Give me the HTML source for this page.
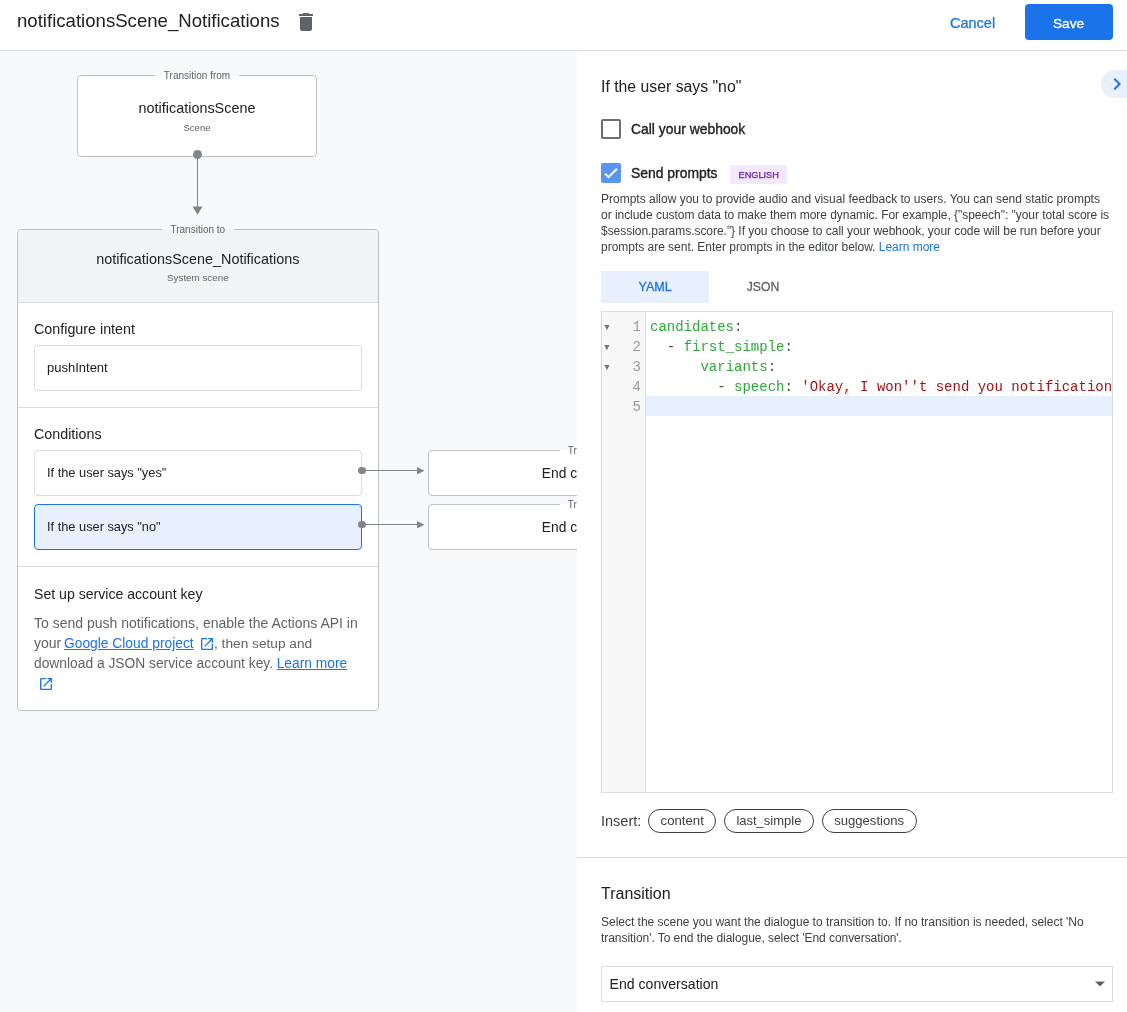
<!DOCTYPE html>
<html><head><meta charset="utf-8">
<style>
*{box-sizing:border-box;margin:0;padding:0}
html,body{width:1127px;height:1012px;overflow:hidden;background:#fff}
body{font-family:"Liberation Sans",sans-serif;color:#202124;position:relative}
.a{position:absolute;white-space:nowrap}
a{color:#1a73e8;text-decoration:underline}
</style></head>
<body><div style="position:absolute;left:0;top:0;width:1127px;height:1012px;will-change:transform">
<div class="a" style="left:0px;top:51px;width:577px;height:961px;background:#f8f9fa"></div>
<div class="a" style="left:0px;top:0px;width:1127px;height:50px;background:#fff"></div>
<div class="a" style="left:0px;top:50px;width:1127px;height:1px;background:#dadce0"></div>
<div class="a" id="title" style="left:17px;top:10px;font-size:18.6px;line-height:22px;color:#202124;font-weight:normal;letter-spacing:0px;">notificationsScene_Notifications</div>
<svg class="a" style="left:294px;top:10px" width="24" height="24" viewBox="0 0 24 24"><path fill="#5f6368" d="M6 19c0 1.1.9 2 2 2h8c1.1 0 2-.9 2-2V7H6v12zM19 4h-3.5l-1-1h-5l-1 1H5v2h14V4z"/></svg>
<div class="a" id="cancel" style="left:950px;top:15px;font-size:14.5px;line-height:17px;color:#1a73e8;font-weight:normal;letter-spacing:0px;-webkit-text-stroke:0.25px #1a73e8;">Cancel</div>
<div class="a" style="left:1025px;top:4px;width:88px;height:36px;background:#1a73e8;border-radius:4px"></div>
<div class="a" id="save" style="left:1053px;top:16px;font-size:13.6px;line-height:16px;color:#fff;font-weight:normal;letter-spacing:0px;-webkit-text-stroke:0.3px #fff;">Save</div>
<div class="a" style="left:77px;top:75px;width:240px;height:82px;background:#fff;border:1px solid #bdc1c6;border-radius:4px"></div>
<div class="a" style="left:155px;top:74px;width:84px;height:3px;background:linear-gradient(#f8f9fa 0,#f8f9fa 1.5px,#fff 1.5px)"></div>
<div class="a" id="tfrom" style="left:-3px;width:400px;text-align:center;top:70px;font-size:10px;line-height:12px;color:#5f6368;font-weight:normal;letter-spacing:0px;">Transition from</div>
<div class="a" id="nscene" style="left:-3px;width:400px;text-align:center;top:100px;font-size:14.4px;line-height:17px;color:#202124;font-weight:normal;letter-spacing:0px;">notificationsScene</div>
<div class="a" id="scene" style="left:-3px;width:400px;text-align:center;top:122px;font-size:9.5px;line-height:11px;color:#5f6368;font-weight:normal;letter-spacing:0px;">Scene</div>
<div class="a" style="left:197px;top:154px;width:1px;height:54px;background:#80868b"></div>
<svg class="a" style="left:192px;top:206px" width="11" height="9" viewBox="0 0 11 9"><path d="M0.5 0.5L10.5 0.5L5.5 8.8Z" fill="#80868b"/></svg>
<div class="a" style="left:193px;top:149.5px;width:9px;height:9px;border-radius:50%;background:#80868b"></div>
<div class="a" style="left:17px;top:229px;width:362px;height:482px;background:#fff;border:1px solid #bdc1c6;border-radius:4px"></div>
<div class="a" style="left:18px;top:230px;width:360px;height:72px;background:#f1f3f4;border-radius:3px 3px 0 0"></div>
<div class="a" style="left:18px;top:302px;width:360px;height:1px;background:#dadce0"></div>
<div class="a" style="left:162px;top:228px;width:72px;height:3px;background:linear-gradient(#f8f9fa 0,#f8f9fa 1.5px,#f1f3f4 1.5px)"></div>
<div class="a" id="tto" style="left:-2.1999999999999886px;width:400px;text-align:center;top:224px;font-size:10px;line-height:12px;color:#5f6368;font-weight:normal;letter-spacing:0px;">Transition to</div>
<div class="a" id="nsn" style="left:-2.1999999999999886px;width:400px;text-align:center;top:251px;font-size:14.4px;line-height:17px;color:#202124;font-weight:normal;letter-spacing:0px;">notificationsScene_Notifications</div>
<div class="a" id="sysscene" style="left:-2.1999999999999886px;width:400px;text-align:center;top:272px;font-size:9.8px;line-height:12px;color:#5f6368;font-weight:normal;letter-spacing:0px;">System scene</div>
<div class="a" id="cfg" style="left:34px;top:321px;font-size:14.3px;line-height:17px;color:#202124;font-weight:normal;letter-spacing:0px;">Configure intent</div>
<div class="a" style="left:34px;top:345px;width:328px;height:46px;background:#fff;border:1px solid #dadce0;border-radius:4px"></div>
<div class="a" id="push" style="left:47px;top:360px;font-size:13px;line-height:16px;color:#202124;font-weight:normal;letter-spacing:0px;">pushIntent</div>
<div class="a" style="left:18px;top:407px;width:360px;height:1px;background:#dadce0"></div>
<div class="a" id="cond" style="left:34px;top:426px;font-size:14.3px;line-height:17px;color:#202124;font-weight:normal;letter-spacing:0px;">Conditions</div>
<div class="a" style="left:34px;top:450px;width:328px;height:46px;background:#fff;border:1px solid #dadce0;border-radius:4px"></div>
<div class="a" id="c1" style="left:47px;top:465px;font-size:12.8px;line-height:15px;color:#202124;font-weight:normal;letter-spacing:0px;">If the user says "yes"</div>
<div class="a" style="left:34px;top:504px;width:328px;height:46px;background:#e8f0fe;border:1px solid #1a73e8;border-radius:4px"></div>
<div class="a" id="c2" style="left:47px;top:519px;font-size:12.8px;line-height:15px;color:#202124;font-weight:normal;letter-spacing:0px;">If the user says "no"</div>
<div class="a" style="left:18px;top:566px;width:360px;height:1px;background:#dadce0"></div>
<div class="a" id="setup" style="left:34px;top:586px;font-size:14.1px;line-height:17px;color:#202124;font-weight:normal;letter-spacing:0px;">Set up service account key</div>
<div class="a" id="p1" style="left:34px;top:615px;font-size:14px;line-height:17px;color:#5f6368;font-weight:normal;letter-spacing:0px;">To send push notifications, enable the Actions API in</div>
<div class="a" id="p2" style="left:34px;top:635px;font-size:14px;line-height:17px;color:#5f6368;font-weight:normal;letter-spacing:0px;">your</div>
<div class="a" id="p2l" style="left:64px;top:635px;font-size:13.8px;line-height:17px;color:#1a73e8;font-weight:normal;letter-spacing:0px;"><a>Google Cloud project</a></div>
<svg class="a" style="left:198.8px;top:635.9px" width="16" height="16" viewBox="0 0 24 24"><path fill="#1a73e8" d="M19 19H5V5h7V3H5c-1.11 0-2 .9-2 2v14c0 1.1.89 2 2 2h14c1.1 0 2-.9 2-2v-7h-2v7zM14 3v2h3.59l-9.83 9.83 1.41 1.41L19 6.41V10h2V3h-7z"/></svg>
<div class="a" id="p2b" style="left:214px;top:636px;font-size:13.7px;line-height:16px;color:#5f6368;font-weight:normal;letter-spacing:0px;">, then setup and</div>
<div class="a" id="p3" style="left:34px;top:655px;font-size:13.8px;line-height:17px;color:#5f6368;font-weight:normal;letter-spacing:0px;">download a JSON service account key.</div>
<div class="a" id="p3l" style="left:276.7px;top:655px;font-size:13.8px;line-height:17px;color:#1a73e8;font-weight:normal;letter-spacing:0px;"><a>Learn more</a></div>
<svg class="a" style="left:37.9px;top:676.3px" width="16" height="16" viewBox="0 0 24 24"><path fill="#1a73e8" d="M19 19H5V5h7V3H5c-1.11 0-2 .9-2 2v14c0 1.1.89 2 2 2h14c1.1 0 2-.9 2-2v-7h-2v7zM14 3v2h3.59l-9.83 9.83 1.41 1.41L19 6.41V10h2V3h-7z"/></svg>
<div class="a" style="left:362px;top:470.0px;width:56px;height:1px;background:#80868b"></div>
<svg class="a" style="left:416.5px;top:466.75px" width="7.5" height="7.5" viewBox="0 0 7.5 7.5"><path d="M0 0L7.5 3.75L0 7.5Z" fill="#80868b"/></svg>
<div class="a" style="left:358px;top:466.75px;width:7.5px;height:7.5px;border-radius:50%;background:#80868b"></div>
<div class="a" style="left:362px;top:524.0px;width:56px;height:1px;background:#80868b"></div>
<svg class="a" style="left:416.5px;top:520.75px" width="7.5" height="7.5" viewBox="0 0 7.5 7.5"><path d="M0 0L7.5 3.75L0 7.5Z" fill="#80868b"/></svg>
<div class="a" style="left:358px;top:520.75px;width:7.5px;height:7.5px;border-radius:50%;background:#80868b"></div>
<div class="a" style="left:428px;top:450px;width:340px;height:46px;background:#fff;border:1px solid #bdc1c6;border-radius:4px"></div>
<div class="a" style="left:560px;top:449px;width:80px;height:3px;background:linear-gradient(#f8f9fa 0,#f8f9fa 1.5px,#fff 1.5px)"></div>
<div class="a" style="left:567.8px;top:445px;font-size:10px;line-height:12px;color:#5f6368;font-weight:normal;letter-spacing:0px;">Transition to</div>
<div class="a" style="left:541.8px;top:465px;font-size:13.8px;line-height:17px;color:#202124;font-weight:normal;letter-spacing:0px;">End conversation</div>
<div class="a" style="left:428px;top:504px;width:340px;height:46px;background:#fff;border:1px solid #bdc1c6;border-radius:4px"></div>
<div class="a" style="left:560px;top:503px;width:80px;height:3px;background:linear-gradient(#f8f9fa 0,#f8f9fa 1.5px,#fff 1.5px)"></div>
<div class="a" style="left:567.8px;top:499px;font-size:10px;line-height:12px;color:#5f6368;font-weight:normal;letter-spacing:0px;">Transition to</div>
<div class="a" style="left:541.8px;top:519px;font-size:13.8px;line-height:17px;color:#202124;font-weight:normal;letter-spacing:0px;">End conversation</div>
<div class="a" style="left:577px;top:51px;width:550px;height:961px;background:#fff"></div>
<div class="a" id="ptitle" style="left:601px;top:77px;font-size:15.8px;line-height:19px;color:#202124;font-weight:normal;letter-spacing:0px;">If the user says "no"</div>
<div class="a" style="left:1101px;top:70px;width:40px;height:28px;background:#e8f0fe;border-radius:14px"></div>
<svg class="a" style="left:1105.4px;top:72px" width="24" height="24" viewBox="0 0 24 24"><path fill="#1a73e8" d="M10 6L8.59 7.41 13.17 12l-4.58 4.59L10 18l6-6z"/></svg>
<div class="a" style="left:601px;top:119px;width:20px;height:20px;border:2px solid #6e6e6e;border-radius:2px"></div>
<div class="a" id="callwh" style="left:631px;top:121px;font-size:13.9px;line-height:17px;color:#202124;font-weight:normal;letter-spacing:0px;-webkit-text-stroke:0.35px #202124;">Call your webhook</div>
<div class="a" style="left:601px;top:163px;width:20px;height:20px;background:#5a94f2;border-radius:2px"></div>
<svg class="a" style="left:601px;top:163px" width="20" height="20" viewBox="0 0 20 20"><path d="M4 10.6L7.6 14.2L16 5.8" fill="none" stroke="#fff" stroke-width="2"/></svg>
<div class="a" id="sendp" style="left:631px;top:165px;font-size:13.9px;line-height:17px;color:#202124;font-weight:normal;letter-spacing:0px;-webkit-text-stroke:0.35px #202124;">Send prompts</div>
<div class="a" style="left:730px;top:165px;width:57px;height:19px;background:#f3e8fd"></div>
<div class="a" id="eng" style="left:738.5px;top:170px;font-size:9.2px;line-height:11px;color:#681da8;font-weight:normal;letter-spacing:0px;-webkit-text-stroke:0.25px #681da8;">ENGLISH</div>
<div class="a" id="pp0" style="left:601px;top:192px;font-size:12px;line-height:14px;color:#3c4043;font-weight:normal;letter-spacing:0px;">Prompts allow you to provide audio and visual feedback to users. You can send static prompts</div>
<div class="a" id="pp1" style="left:601px;top:208px;font-size:12px;line-height:14px;color:#3c4043;font-weight:normal;letter-spacing:-0.039px;">or include custom data to make them more dynamic. For example, {"speech": "your total score is</div>
<div class="a" id="pp2" style="left:601px;top:224px;font-size:12px;line-height:14px;color:#3c4043;font-weight:normal;letter-spacing:-0.038px;">$session.params.score."} If you choose to call your webhook, your code will be run before your</div>
<div class="a" id="pp3" style="left:601px;top:240px;font-size:12px;line-height:14px;color:#3c4043;font-weight:normal;letter-spacing:-0.02px;">prompts are sent. Enter prompts in the editor below. <span style="color:#1a73e8">Learn more</span></div>
<div class="a" style="left:601px;top:271px;width:108px;height:32px;background:#e8f0fe"></div>
<div class="a" id="yaml" style="left:638.5px;top:280px;font-size:12.5px;line-height:15px;color:#1a73e8;font-weight:normal;letter-spacing:0px;-webkit-text-stroke:0.3px #1a73e8;">YAML</div>
<div class="a" id="json" style="left:746.7px;top:280px;font-size:12.2px;line-height:15px;color:#5f6368;font-weight:normal;letter-spacing:0px;-webkit-text-stroke:0.3px #5f6368;">JSON</div>
<div class="a" style="left:601px;top:311px;width:512px;height:482px;border:1px solid #dadce0;background:#fff"></div>
<div class="a" style="left:602px;top:312px;width:44px;height:480px;background:#f7f7f7;border-right:1px solid #dadce0"></div>
<div class="a" style="left:646px;top:396px;width:466px;height:20px;background:#e8f0fe"></div>
<div class="a" style="left:620px;top:319px;font-size:14px;line-height:17px;color:#999;font-weight:normal;letter-spacing:0px;font-family:'Liberation Mono',monospace;width:21px;text-align:right">1</div>
<div class="a" style="left:620px;top:339px;font-size:14px;line-height:17px;color:#999;font-weight:normal;letter-spacing:0px;font-family:'Liberation Mono',monospace;width:21px;text-align:right">2</div>
<div class="a" style="left:620px;top:359px;font-size:14px;line-height:17px;color:#999;font-weight:normal;letter-spacing:0px;font-family:'Liberation Mono',monospace;width:21px;text-align:right">3</div>
<div class="a" style="left:620px;top:379px;font-size:14px;line-height:17px;color:#999;font-weight:normal;letter-spacing:0px;font-family:'Liberation Mono',monospace;width:21px;text-align:right">4</div>
<div class="a" style="left:620px;top:399px;font-size:14px;line-height:17px;color:#999;font-weight:normal;letter-spacing:0px;font-family:'Liberation Mono',monospace;width:21px;text-align:right">5</div>
<svg class="a" style="left:603.5px;top:324.5px" width="6" height="6" viewBox="0 0 6 6"><path d="M0.3 0L5.5 0L2.9 5.2Z" fill="#777"/></svg>
<svg class="a" style="left:603.5px;top:344.5px" width="6" height="6" viewBox="0 0 6 6"><path d="M0.3 0L5.5 0L2.9 5.2Z" fill="#777"/></svg>
<svg class="a" style="left:603.5px;top:364.5px" width="6" height="6" viewBox="0 0 6 6"><path d="M0.3 0L5.5 0L2.9 5.2Z" fill="#777"/></svg>
<div class="a" id="code0" style="left:650px;top:319px;font-size:14px;line-height:17px;color:#202124;font-weight:normal;letter-spacing:0px;font-family:'Liberation Mono',monospace;white-space:pre"><span style="color:#2fa83a">candidates</span><span style="color:#4a4a4a">:</span></div>
<div class="a" id="code1" style="left:650px;top:339px;font-size:14px;line-height:17px;color:#202124;font-weight:normal;letter-spacing:0px;font-family:'Liberation Mono',monospace;white-space:pre">  <span style="color:#4a4a4a">-</span> <span style="color:#2fa83a">first_simple</span><span style="color:#4a4a4a">:</span></div>
<div class="a" id="code2" style="left:650px;top:359px;font-size:14px;line-height:17px;color:#202124;font-weight:normal;letter-spacing:0px;font-family:'Liberation Mono',monospace;white-space:pre">      <span style="color:#2fa83a">variants</span><span style="color:#4a4a4a">:</span></div>
<div class="a" id="code3" style="left:650px;top:379px;font-size:14px;line-height:17px;color:#202124;font-weight:normal;letter-spacing:0px;font-family:'Liberation Mono',monospace;white-space:pre">        <span style="color:#4a4a4a">-</span> <span style="color:#2fa83a">speech</span><span style="color:#4a4a4a">:</span> <span style="color:#a31515">'Okay, I won''t send you notification</span></div>
<div class="a" id="insert" style="left:601px;top:813px;font-size:14.5px;line-height:17px;color:#3c4043;font-weight:normal;letter-spacing:0px;">Insert:</div>
<div class="a" style="left:648px;top:809px;width:68px;height:24px;border:1px solid #3c4043;border-radius:12px"></div>
<div class="a" style="left:660.6px;top:813px;font-size:13.2px;line-height:16px;color:#3c4043;font-weight:normal;letter-spacing:0px;">content</div>
<div class="a" style="left:724px;top:809px;width:90px;height:24px;border:1px solid #3c4043;border-radius:12px"></div>
<div class="a" style="left:736.4px;top:813px;font-size:13px;line-height:16px;color:#3c4043;font-weight:normal;letter-spacing:0px;">last_simple</div>
<div class="a" style="left:822px;top:809px;width:95px;height:24px;border:1px solid #3c4043;border-radius:12px"></div>
<div class="a" style="left:834.2px;top:813px;font-size:13.1px;line-height:16px;color:#3c4043;font-weight:normal;letter-spacing:0px;">suggestions</div>
<div class="a" style="left:577px;top:857px;width:550px;height:1px;background:#dadce0"></div>
<div class="a" id="trans" style="left:601px;top:884px;font-size:16px;line-height:19px;color:#202124;font-weight:normal;letter-spacing:0px;">Transition</div>
<div class="a" id="tp1" style="left:601px;top:915px;font-size:12px;line-height:14px;color:#3c4043;font-weight:normal;letter-spacing:-0.0135px;">Select the scene you want the dialogue to transition to. If no transition is needed, select 'No</div>
<div class="a" id="tp2" style="left:601px;top:931px;font-size:12px;line-height:14px;color:#3c4043;font-weight:normal;letter-spacing:-0.055px;">transition'. To end the dialogue, select 'End conversation'.</div>
<div class="a" style="left:601px;top:966px;width:512px;height:36px;border:1px solid #dadce0;background:#fff"></div>
<div class="a" id="endsel" style="left:609.5px;top:976px;font-size:14.1px;line-height:17px;color:#202124;font-weight:normal;letter-spacing:0px;">End conversation</div>
<svg class="a" style="left:1094px;top:980px" width="12" height="8" viewBox="0 0 12 8"><path d="M1 1.5L11 1.5L6 6.5Z" fill="#5f6368"/></svg>
</div></body></html>
